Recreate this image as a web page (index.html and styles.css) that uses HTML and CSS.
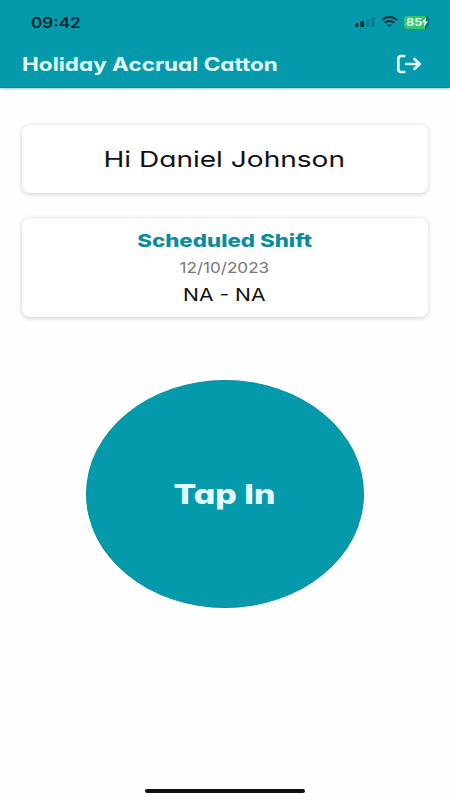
FILE: index.html
```html
<!DOCTYPE html>
<html lang="en">
<head>
<meta charset="utf-8">
<meta name="viewport" content="width=device-width, initial-scale=1">
<title>Holiday Accrual Catton</title>
<link rel="stylesheet" href="styles.css">
</head>
<body>
<header class="header">
  <div class="status">
    <span class="time">09:42</span>
    <div class="indicators">
      <svg class="signal" width="20" height="12" viewBox="0 0 20 12">
        <rect x="0" y="7.2" width="3.4" height="3.8" rx=".8" fill="#052a31"/>
        <rect x="5.3" y="5.2" width="3.8" height="5.8" rx=".8" fill="#052a31"/>
        <rect x="11.3" y="2.8" width="3" height="8.2" rx=".8" fill="#087f90"/>
        <rect x="16.6" y="1" width="3" height="10" rx=".8" fill="#087f90"/>
      </svg>
      <svg class="wifi" width="17" height="12" viewBox="0 0 17 12" fill="none" stroke="#06343c" stroke-width="2">
        <path d="M1 4.1C5-.1 12-.1 16 4.1M3.7 6.9c2.7-2.6 6.9-2.6 9.6 0"/>
        <path d="M6 9.1c1.5-1.3 3.5-1.3 5 0l-2.5 2z" fill="#06343c" stroke="none"/>
      </svg>
      <div class="battery">
        <span class="level">85</span>
        <svg class="bolt" width="6" height="10" viewBox="0 0 6 10"><path d="M4.2 0L0 5.5h2.6L1.8 10 6 4.4H3.4z" fill="#eafff4"/></svg>
      </div>
    </div>
  </div>
  <div class="titlebar">
    <h1 class="title">Holiday Accrual Catton</h1>
    <svg class="logout" width="27" height="20" viewBox="0 0 27 20" fill="none" stroke="#e4fdff" stroke-width="2.6" stroke-linecap="round" stroke-linejoin="round">
      <path d="M8.3 2H5.2Q2.4 2 2.4 4.8v10.4Q2.4 18 5.2 18h3.1M10.2 10h13.4M18.4 5l5.4 5-5.4 5"/>
    </svg>
  </div>
</header>
<main class="content">
  <section class="card greeting"><span class="hello">Hi Daniel Johnson</span></section>
  <section class="card shift">
    <h2 class="heading">Scheduled Shift</h2>
    <span class="date">12/10/2023</span>
    <span class="hours">NA - NA</span>
  </section>
  <button class="tap" type="button"><span class="tap-label">Tap In</span></button>
</main>
<div class="home-indicator"></div>
</body>
</html>
```
FILE: styles.css
```css
* { box-sizing: border-box; }

body {
  margin: 0;
  height: 800px;
  display: flex;
  flex-direction: column;
  overflow: hidden;
  background: #fefefe;
  color: #111;
  font-family: Inter, "Liberation Sans", sans-serif;
  font-feature-settings: "cv11";
}

h1, h2 { margin: 0; }

span, h1, h2 { white-space: nowrap; }

.header {
  height: 88px;
  flex: none;
  background: #0599ac;
  border-bottom: 1px solid #07899b;
  box-shadow: 0 1px 2px #8fc9d2;
}

.status {
  height: 44px;
  padding: 0 21px 0 31px;
  display: flex;
  align-items: center;
  justify-content: space-between;
}

.time {
  font-size: 14px;
  line-height: 20px;
  font-weight: 600;
  color: #05262d;
  transform: translateY(.5px) scaleX(1.22);
  transform-origin: left;
}

.indicators { display: flex; align-items: center; }
.wifi { margin-left: 6px; }

.battery {
  width: 25px;
  height: 13px;
  margin-left: 6px;
  padding-left: 2px;
  display: flex;
  align-items: center;
  border-radius: 4px;
  background: linear-gradient(90deg, #35c56c 84%, #087282 84%);
}

.level {
  width: 16px;
  font-size: 11px;
  line-height: 13px;
  font-weight: 700;
  color: #dcffe9;
  transform: scaleX(1.15);
  transform-origin: left;
}

.titlebar {
  height: 40px;
  padding: 0 27px 0 22px;
  display: flex;
  align-items: center;
  justify-content: space-between;
}

.title {
  font-size: 18.5px;
  line-height: 24px;
  font-weight: 650;
  color: #e0fcff;
  transform: scaleX(1.217);
  transform-origin: left;
}

.content {
  flex: 1;
  padding: 37px 22px 0;
  display: flex;
  flex-direction: column;
  align-items: center;
}

.card {
  width: 100%;
  display: flex;
  flex-direction: column;
  align-items: center;
  border-radius: 8px;
  background: #fff;
  box-shadow: 0 1px 5px rgba(0, 0, 0, .2);
}

.greeting { height: 68px; justify-content: center; }

.hello {
  font-size: 22px;
  line-height: 28px;
  font-weight: 370;
  transform: translateX(-.5px) scaleX(1.275);
}

.shift { height: 99px; margin-top: 25px; padding-top: 11px; }

.heading {
  font-size: 17.5px;
  line-height: 24px;
  font-weight: 800;
  color: #078d9e;
  transform: scaleX(1.275);
}

.date {
  margin-top: 4px;
  font-size: 15px;
  line-height: 22px;
  color: #777;
  transform: translateX(-1px) scaleX(1.14);
}

.hours {
  margin-top: 4px;
  font-size: 17px;
  line-height: 24px;
  transform: translateX(-1px) scaleX(1.24);
}

.tap {
  width: 278px;
  height: 228px;
  margin-top: 63px;
  padding: 0;
  display: flex;
  align-items: center;
  justify-content: center;
  border: 1px solid #078da0;
  border-radius: 50%;
  background: #0599ac;
  color: #e4fdff;
  font: inherit;
}

.tap-label {
  font-size: 27.5px;
  line-height: 36px;
  font-weight: 800;
  transform: translate(-1px, -.5px) scaleX(1.23);
}

.home-indicator {
  width: 160px;
  height: 4px;
  flex: none;
  margin: 0 auto 7.5px;
  border-radius: 2px;
  background: #111;
}
```
